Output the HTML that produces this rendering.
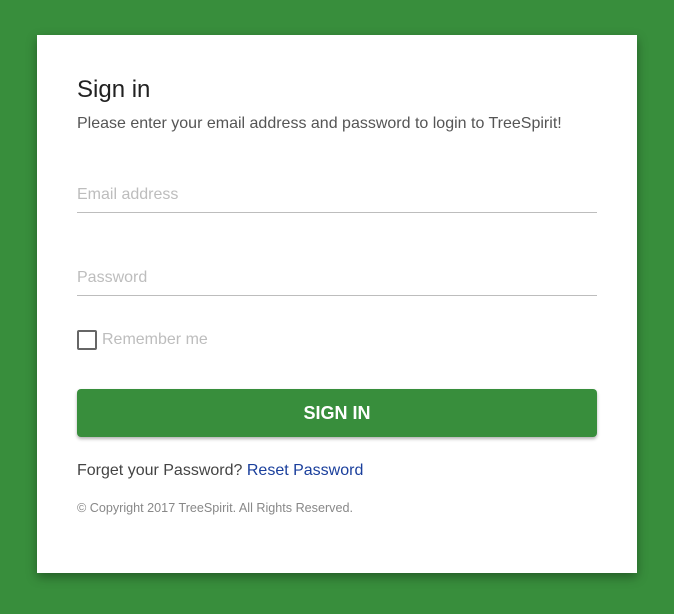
<!DOCTYPE html>
<html><head><meta charset="utf-8"><style>
html,body{margin:0;padding:0}
body{width:674px;height:614px;background:#388e3c;position:relative;overflow:hidden;font-family:"Liberation Sans",sans-serif}
.card{position:absolute;left:37px;top:35px;width:600px;height:538px;background:#fff;box-shadow:0 4px 10px rgba(0,0,0,.35)}
.a{position:absolute;white-space:nowrap}
.line{position:absolute;left:40px;width:520px;height:1px;background:#bdbdbd}
</style></head><body>
<div class="card">
<div class="a" style="left:40px;top:41px;font-size:24px;color:#212121">Sign in</div>
<div class="a" style="left:40px;top:80px;font-size:16px;color:#555">Please enter your email address and password to login to TreeSpirit!</div>
<div class="a" style="left:40px;top:151px;font-size:16px;color:#bdbdbd">Email address</div>
<div class="line" style="top:177px"></div>
<div class="a" style="left:40px;top:234px;font-size:16px;color:#bdbdbd">Password</div>
<div class="line" style="top:260px"></div>
<div class="a" style="left:40px;top:295px;width:16px;height:16px;border:2px solid #666;border-radius:2px"></div>
<div class="a" style="left:65px;top:296px;font-size:16px;color:#bdbdbd">Remember me</div>
<div class="a" style="left:40px;top:354px;width:520px;height:48px;background:#388e3c;border-radius:4px;box-shadow:0 2px 3px rgba(0,0,0,.3);color:#fff;font-weight:bold;font-size:18px;text-align:center;line-height:48px">SIGN IN</div>
<div class="a" style="left:40px;top:427px;font-size:16px;color:#444">Forget your Password? <span style="color:#1a3f9c">Reset Password</span></div>
<div class="a" style="left:40px;top:466px;font-size:12.6px;color:#888">© Copyright 2017 TreeSpirit. All Rights Reserved.</div>
</div>
</body></html>
